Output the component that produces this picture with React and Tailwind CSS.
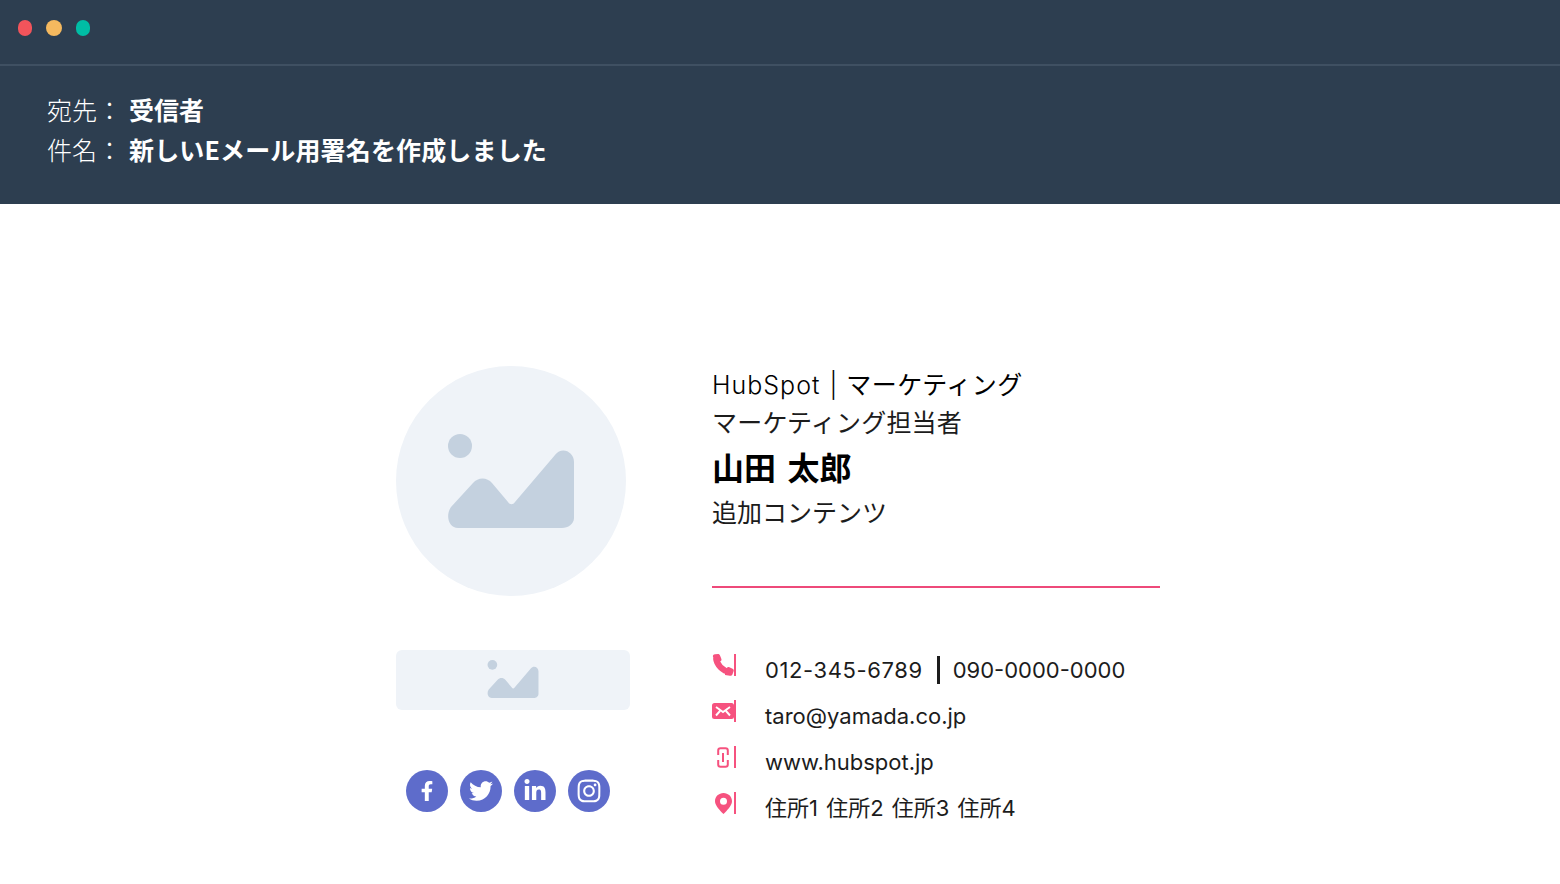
import { FaFacebookF, FaTwitter, FaLinkedinIn, FaInstagram } from 'react-icons/fa'

const jp = '[font-family:"Noto_Sans_CJK_JP",sans-serif]'
const sig = '[font-family:Inter,"Noto_Sans_CJK_JP",sans-serif]'

function PicturePlaceholder({ className }) {
    return (
        <svg viewBox="0 0 126 94" className={className}>
            <circle cx="12" cy="12" r="12" fill="#c4d1df" />
            <path
                d="M3 73 L25 49 C30 43 39 43 44 49 L60 68 C62 71 65 71 67 68 L107 21 C114 12 126 18 126 28 L126 84 C126 90 120 94 114 94 L10 94 C1 94 -3 82 3 73 Z"
                fill="#c4d1df"
            />
        </svg>
    )
}

function PhoneIcon() {
    return (
        <svg viewBox="0 0 22 22" className="w-[22px] h-[22px]">
            <path d="M4 4 C4.5 10.5 10.5 17 18 18" fill="none" stroke="#f6527f" strokeWidth="6" />
            <path d="M1 3 C0.5 1.5 1.5 0.5 3 0.3 L6 0 C7 0 7.6 0.6 8 1.4 L9.4 5 C9.8 6.2 9.2 7 8.2 7.6 L3.5 9 Z" fill="#f6527f" />
            <path d="M13 18 L14.8 14 C15.4 13 16.4 12.8 17.4 13.2 L20.6 14.8 C21.6 15.4 22 16.2 21.6 17.2 L20.4 20.4 C20 21.4 19 22 18 21.8 L13 21 Z" fill="#f6527f" />
        </svg>
    )
}

function MailIcon() {
    return (
        <svg viewBox="0 0 22 16" className="w-[22px] h-[16px]">
            <rect width="22" height="16" rx="2.5" fill="#f6527f" />
            <path d="M4 4 L11 9 L18 4 M4 12.5 L8 8 M18 12.5 L14 8" fill="none" stroke="#fff" strokeWidth="1.9" />
        </svg>
    )
}

function LinkIcon() {
    return (
        <svg viewBox="0 0 12 21" className="w-[12px] h-[21px]">
            <path
                d="M1.2 8 V3.5 Q1.2 1.2 3.5 1.2 H8.5 Q10.8 1.2 10.8 3.5 V8 M1.2 13 V17.5 Q1.2 19.8 3.5 19.8 H8.5 Q10.8 19.8 10.8 17.5 V13 M6 6 V15"
                fill="none"
                stroke="#f6527f"
                strokeWidth="2"
            />
        </svg>
    )
}

function PinIcon() {
    return (
        <svg viewBox="0 0 17 21" className="w-[17px] h-[21px]">
            <path
                fillRule="evenodd"
                d="M8.5 0 C13.2 0 17 3.6 17 8.2 C17 12.5 12 17.5 8.5 21 C5 17.5 0 12.5 0 8.2 C0 3.6 3.8 0 8.5 0 Z M8.5 4.7 A3.5 3.5 0 1 0 8.5 11.7 A3.5 3.5 0 1 0 8.5 4.7 Z"
                fill="#f6527f"
            />
        </svg>
    )
}

function ContactRow({ icon, children }) {
    return (
        <div className="flex items-center h-[46px]">
            <div className="flex items-center w-[25px] h-[22px] -mt-[10px]">
                <div className="flex items-center justify-center w-[22px]">{icon}</div>
                <div className="w-[2px] h-[22px] bg-[#f6527f]" />
            </div>
            <div className="ml-[28px] text-[22px] text-[#1c1c1c] leading-none">{children}</div>
        </div>
    )
}

function SocialIcon({ children }) {
    return (
        <div className="flex items-center justify-center w-[42px] h-[42px] rounded-full bg-[#5e6ccb] text-white">
            {children}
        </div>
    )
}

export default function App() {
    return (
        <div className={`${jp} h-[884px] bg-white overflow-hidden`}>
            {/* Mail header */}
            <div className="h-[204px] bg-[#2d3e50]">
                <div className="flex items-center pl-[18px] h-[64px] pb-[8px] gap-[14px]">
                    <div className="w-[14px] h-[16px] rounded-full bg-[#f2545b]" />
                    <div className="w-[16px] h-[16px] rounded-full bg-[#f5b95f]" />
                    <div className="w-[14px] h-[16px] rounded-full bg-[#00bda5]" />
                </div>
                <div className="h-[2px] bg-[#3f5062]" />
                <div className="pl-[47px] pt-[23px] text-[25px] leading-[40px] text-white">
                    <div className="flex">
                        <span className="w-[82px] font-light">宛先：</span>
                        <span className="font-bold">受信者</span>
                    </div>
                    <div className="flex">
                        <span className="w-[82px] font-light">件名：</span>
                        <span className="font-bold tracking-[0.15px]">新しいEメール用署名を作成しました</span>
                    </div>
                </div>
            </div>

            {/* Signature */}
            <div className="flex pl-[396px] pt-[162px] gap-[82px]">
                <div className="w-[234px]">
                    <div className="flex items-center justify-center w-[230px] h-[230px] rounded-full bg-[#eff3f8]">
                        <PicturePlaceholder className="w-[126px] h-[94px]" />
                    </div>
                    <div className="flex items-center justify-center mt-[54px] h-[60px] rounded-[6px] bg-[#eff3f8]">
                        <PicturePlaceholder className="w-[52px] h-[38px] -mt-[3px]" />
                    </div>
                    <div className="flex gap-[12px] pl-[10px] mt-[60px]">
                        <SocialIcon><FaFacebookF size={20} /></SocialIcon>
                        <SocialIcon><FaTwitter size={24} /></SocialIcon>
                        <SocialIcon><FaLinkedinIn size={24} /></SocialIcon>
                        <SocialIcon><FaInstagram size={26} /></SocialIcon>
                    </div>
                </div>
                <div className={`${sig} w-[448px]`}>
                    <div className="flex text-[25px] leading-[38px] text-black">
                        <span className="font-light tracking-[1px]">HubSpot</span>
                        <span className="ml-[9px] font-light">|</span>
                        <span className="ml-[9px] tracking-[0.5px]">マーケティング</span>
                    </div>
                    <div className="text-[25px] leading-[38px] text-[#1c1c1c] tracking-[0.2px]">マーケティング担当者</div>
                    <div className="text-[32px] leading-[54px] font-bold text-black [word-spacing:4px]">山田 太郎</div>
                    <div className="text-[25px] leading-[34px] text-[#1c1c1c]">追加コンテンツ</div>
                    <div className="mt-[56px] h-[2px] bg-[#ee4a7a]" />
                    <div className="mt-[59px]">
                        <ContactRow icon={<PhoneIcon />}>
                            <span className="flex items-center">
                                <span className="tracking-[0.6px]">012-345-6789</span>
                                <span className="ml-[14px] mr-[13px] w-[3px] h-[28px] bg-[#1c1c1c]" />
                                090-0000-0000
                            </span>
                        </ContactRow>
                        <ContactRow icon={<MailIcon />}>taro@yamada.co.jp</ContactRow>
                        <ContactRow icon={<LinkIcon />}>www.hubspot.jp</ContactRow>
                        <ContactRow icon={<PinIcon />}>
                            <span className="[word-spacing:2px]">住所1 住所2 住所3 住所4</span>
                        </ContactRow>
                    </div>
                </div>
            </div>
        </div>
    )
}
